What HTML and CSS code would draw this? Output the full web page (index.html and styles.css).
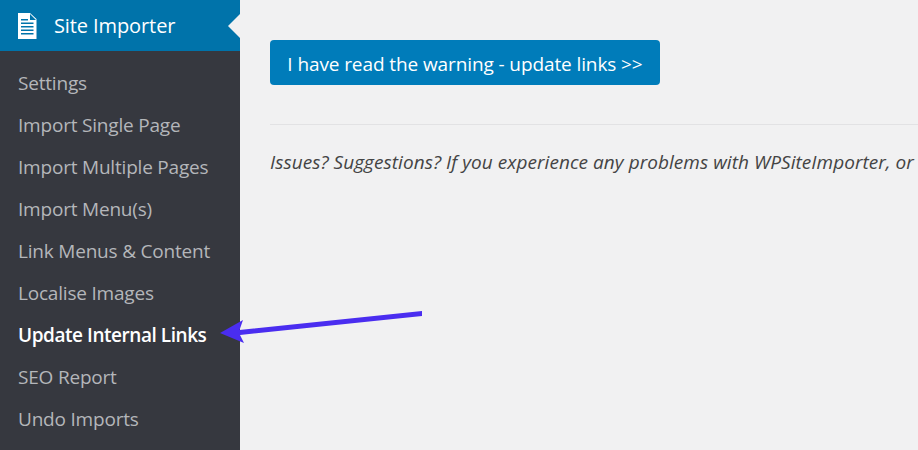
FILE: index.html
```html
<!DOCTYPE html>
<html lang="en">
<head>
    <meta charset="UTF-8">
    <meta name="viewport" content="width=device-width, initial-scale=1.0">
    <title>Update Internal Links</title>
    <link rel="stylesheet" href="styles.css">
</head>
<body>
    <aside class="sidebar">
        <div class="menu-head">
            <svg class="menu-icon" width="20" height="28" viewBox="0 0 20 28">
                <path fill="#fff" fill-rule="evenodd" d="M1 1H13L19.500 7V27H1ZM13 2V8H19ZM4 7V8.500H11V7ZM4 10.500V12H16.500V10.500ZM4 14V15.500H16.500V14ZM4 17.500V19H16.500V17.500ZM4 21V22.500H16.500V21Z"/>
            </svg>
            <span class="menu-title">Site Importer</span>
        </div>
        <ul class="submenu">
            <li>Settings</li>
            <li>Import Single Page</li>
            <li>Import Multiple Pages</li>
            <li>Import Menu(s)</li>
            <li>Link Menus &amp; Content</li>
            <li>Localise Images</li>
            <li class="current">Update Internal Links</li>
            <li>SEO Report</li>
            <li>Undo Imports</li>
        </ul>
    </aside>

    <main class="content">
        <button class="update-btn">I have read the warning - update links &gt;&gt;</button>
        <hr class="divider">
        <p class="note">Issues? Suggestions? If you experience any problems with WPSiteImporter, or</p>
    </main>

    <!-- annotation drawn over the page -->
    <svg class="arrow" width="210" height="50" viewBox="0 0 210 50">
        <path fill="#4a2df0" d="M0 22L23 9L19.500 19L202 0V5L20 24L24 32Z"/>
    </svg>
</body>
</html>
```

FILE: styles.css
```css
html, body {
    height: 100%;
}

body {
    display: flex;
    margin: 0;
    height: 450px;
    overflow: hidden;
    background: #f1f1f2;
    font-family: 'Open Sans', 'Noto Sans', sans-serif;
}

.sidebar {
    flex: 0 0 240px;
    background: #36383f;
}

.menu-head {
    position: relative;
    display: flex;
    align-items: center;
    gap: 17px;
    height: 51px;
    padding-left: 17px;
    box-sizing: border-box;
    background: #0073aa;
    color: #fff;
}

.menu-head::after {
    content: '';
    position: absolute;
    right: 0;
    top: 14px;
    border: 12px solid transparent;
    border-right-color: #f1f1f2;
    border-left-width: 0;
}

.menu-icon {
    flex: none;
}

.menu-title {
    font-size: 20px;
    letter-spacing: -0.1px;
}

.submenu {
    list-style: none;
    margin: 0;
    padding: 11px 0 0;
}

.submenu li {
    height: 42px;
    line-height: 42px;
    padding-left: 18px;
    font-size: 19px;
    letter-spacing: -0.2px;
    color: #b4b6ba;
}

.submenu .current {
    font-weight: 600;
    letter-spacing: -0.45px;
    color: #fff;
}

.content {
    flex: 1;
    min-width: 0;
    padding: 40px 0 0 30px;
}

.update-btn {
    display: block;
    width: 390px;
    height: 45px;
    padding: 3px 0 0;
    border: none;
    border-radius: 4px;
    background: #007cba;
    color: #fff;
    font-family: inherit;
    font-size: 19px;
    letter-spacing: -0.1px;
}

.divider {
    height: 1px;
    margin: 39px 0 0;
    border: none;
    background: #e2e2e4;
}

.note {
    margin: 24px 0 0;
    white-space: nowrap;
    font-size: 19px;
    line-height: 26px;
    letter-spacing: 0.05px;
    font-style: italic;
    color: #444;
}

.arrow {
    position: absolute;
    left: 220px;
    top: 311px;
}
```
